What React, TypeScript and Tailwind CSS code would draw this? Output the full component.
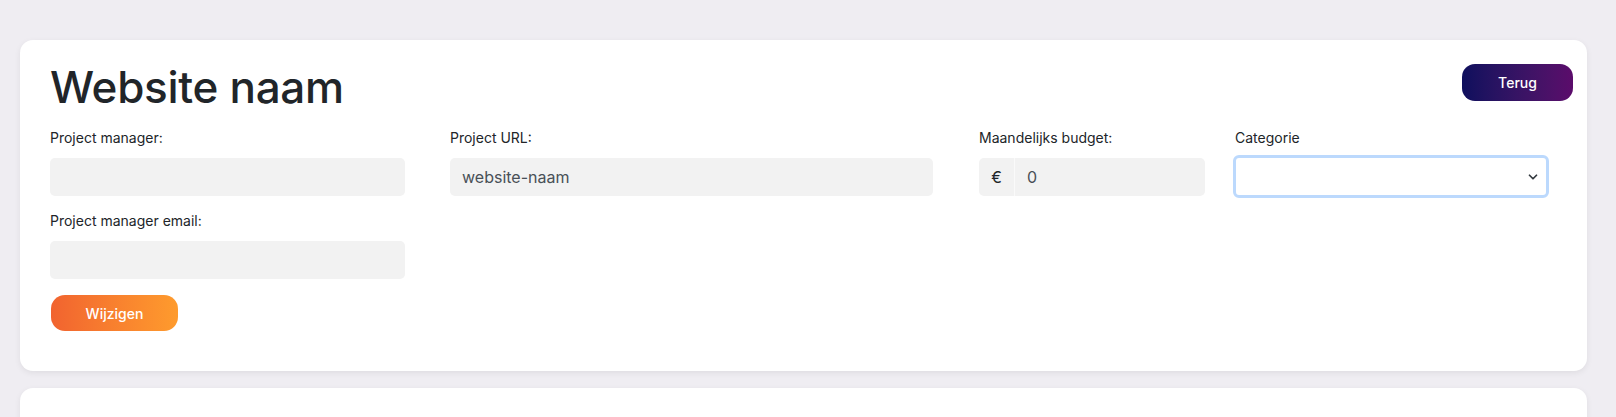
import { ChevronDown } from "lucide-react";

interface FieldProps {
  label: string;
  width: string;
  children: React.ReactNode;
}

function Field({ label, width, children }: FieldProps) {
  return (
    <div className={`flex flex-col ${width}`}>
      <label className="text-[14px] leading-[21px] text-[#212529] mb-[10px]">{label}</label>
      {children}
    </div>
  );
}

export default function App() {
  return (
    <div className="min-h-screen bg-[#efedf2] pt-[40px] pl-[20px] font-['Inter','Noto_Sans',sans-serif] overflow-hidden">
      {/* Project card */}
      <div className="w-[1567px] bg-white rounded-[13px] shadow-[0_2px_6px_rgba(0,0,0,0.07)] pt-[25px] pb-[40px] pl-[30px] pr-[14px]">
        <div className="flex items-start justify-between">
          <h1 className="text-[44px] leading-none font-medium text-[#212529] tracking-[-0.3px]">Website naam</h1>
          <button className="mt-[-1px] w-[111px] h-[37px] rounded-[13px] bg-gradient-to-r from-[#0e0f5d] to-[#5b0b6b] text-white text-[14px] font-medium">
            Terug
          </button>
        </div>

        <div className="flex mt-[18px]">
          <Field label="Project manager:" width="w-[355px] mr-[45px]">
            <input className="h-[38px] rounded-[5px] bg-[#f2f2f2] outline-none px-3" />
          </Field>
          <Field label="Project URL:" width="w-[483px] mr-[46px]">
            <input
              defaultValue="website-naam"
              className="h-[38px] rounded-[5px] bg-[#f2f2f2] outline-none px-3 text-[16px] text-[#495057]"
            />
          </Field>
          <Field label="Maandelijks budget:" width="w-[226px] mr-[30px]">
            <div className="flex h-[38px]">
              <span className="w-[36px] flex items-center justify-center rounded-l-[5px] bg-[#f2f2f2] border-r border-[#fafafa] text-[16px] text-[#212529]">
                €
              </span>
              <input
                defaultValue="0"
                className="flex-1 min-w-0 rounded-r-[5px] bg-[#f2f2f2] outline-none px-3 text-[16px] text-[#495057]"
              />
            </div>
          </Field>
          <div className="flex flex-col w-[312px]">
            <label className="text-[14px] leading-[21px] text-[#212529] mb-[7px]">Categorie</label>
            <div className="relative -ml-[2px] w-[316px]">
              <select className="w-full h-[43px] appearance-none rounded-[6px] border-[3px] border-[#bcd9fd] bg-white outline-none px-3" />
              <ChevronDown className="absolute right-[9px] top-[15px] w-[14px] h-[14px] text-[#343a40]" strokeWidth={3} />
            </div>
          </div>
        </div>

        <div className="mt-[12px]">
          <Field label="Project manager email:" width="w-[355px]">
            <input className="h-[38px] rounded-[5px] bg-[#f2f2f2] outline-none px-3" />
          </Field>
        </div>

        <button className="mt-[16px] ml-[1px] w-[127px] h-[36px] rounded-[14px] bg-gradient-to-r from-[#f1632f] to-[#fe9b2d] text-white text-[14px] font-medium">
          Wijzigen
        </button>
      </div>

      {/* Next card */}
      <div className="mt-[17px] w-[1567px] h-[120px] bg-white rounded-[13px] shadow-[0_2px_6px_rgba(0,0,0,0.07)]" />
    </div>
  );
}
